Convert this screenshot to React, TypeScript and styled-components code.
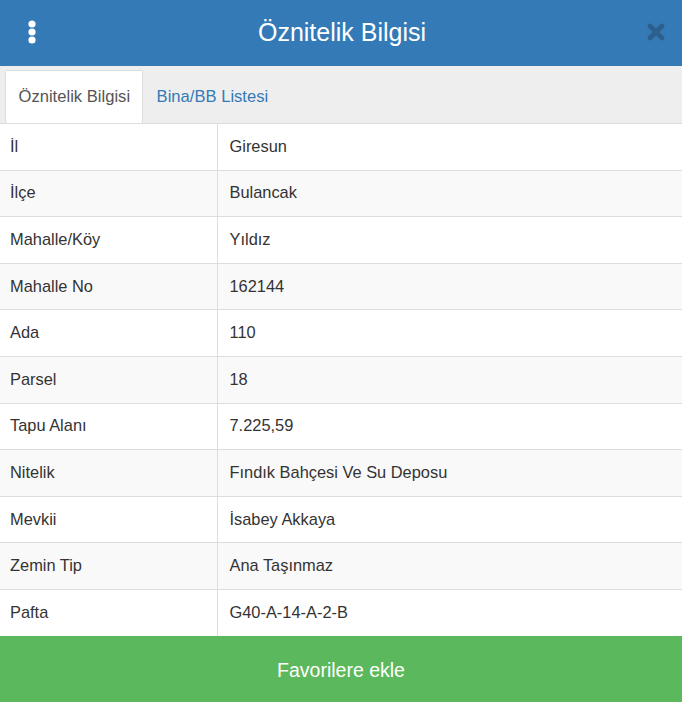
import * as React from "react";
import styled, { createGlobalStyle } from "styled-components";

const GlobalStyle = createGlobalStyle`
  html, body {
    margin: 0;
    padding: 0;
    background: #fff;
  }
  body {
    font-family: "Liberation Sans", Arial, sans-serif;
    color: #333;
  }
  * { box-sizing: border-box; }
`;

const rows: [string, string][] = [
  ["İl", "Giresun"],
  ["İlçe", "Bulancak"],
  ["Mahalle/Köy", "Yıldız"],
  ["Mahalle No", "162144"],
  ["Ada", "110"],
  ["Parsel", "18"],
  ["Tapu Alanı", "7.225,59"],
  ["Nitelik", "Fındık Bahçesi Ve Su Deposu"],
  ["Mevkii", "İsabey Akkaya"],
  ["Zemin Tip", "Ana Taşınmaz"],
  ["Pafta", "G40-A-14-A-2-B"],
];

const App = () => {
  return (
    <>
      <GlobalStyle />
      <Panel>
        <Header>
          <MenuButton>
            <svg width="10" height="26" viewBox="0 0 10 26">
              <circle cx="5" cy="5" r="3.6" fill="#fff" />
              <circle cx="5" cy="13" r="3.6" fill="#fff" />
              <circle cx="5" cy="21" r="3.6" fill="#fff" />
            </svg>
          </MenuButton>
          <Title>Öznitelik Bilgisi</Title>
          <CloseButton>
            <svg width="18" height="18" viewBox="0 0 18 18">
              <path
                d="M3 3 L15 15 M15 3 L3 15"
                stroke="#2c5f8e"
                strokeWidth="4.6"
                strokeLinecap="round"
              />
            </svg>
          </CloseButton>
        </Header>
        <Tabs>
          <Tab $active>Öznitelik Bilgisi</Tab>
          <Tab>Bina/BB Listesi</Tab>
        </Tabs>
        <Table>
          <tbody>
            {rows.map(([label, value], i) => (
              <Row key={label} $striped={i % 2 === 1}>
                <LabelCell>{label}</LabelCell>
                <ValueCell>{value}</ValueCell>
              </Row>
            ))}
          </tbody>
        </Table>
        <FavButton>Favorilere ekle</FavButton>
      </Panel>
    </>
  );
};

export default App;

const Panel = styled.div`
  width: 682px;
  height: 702px;
  display: flex;
  flex-direction: column;
  overflow: hidden;
`;

const Header = styled.div`
  height: 66px;
  flex: none;
  background: #337ab7;
  display: flex;
  align-items: center;
  justify-content: space-between;
  padding: 0 17px 0 27px;
`;

const MenuButton = styled.div`
  width: 10px;
  display: flex;
  align-items: center;
  margin-top: -2px;
`;

const Title = styled.h1`
  margin: 0 0 2px 0;
  font-size: 25px;
  font-weight: 400;
  color: #fff;
`;

const CloseButton = styled.div`
  width: 18px;
  display: flex;
  align-items: center;
  margin-top: -2px;
`;

const Tabs = styled.ul`
  flex: none;
  margin: 0;
  padding: 4px 5px 0;
  height: 57px;
  display: flex;
  background: #eee;
  list-style: none;
`;

const Tab = styled.li<{ $active?: boolean }>`
  padding: 0 12px 0 12.5px;
  height: 53px;
  display: flex;
  align-items: center;
  font-size: 16.6px;
  border: 1px solid ${(p) => (p.$active ? "#ddd" : "transparent")};
  border-bottom: 0;
  background: ${(p) => (p.$active ? "#fff" : "transparent")};
  color: ${(p) => (p.$active ? "#555" : "#337ab7")};
  border-radius: 2px 2px 0 0;
`;

const Table = styled.table`
  width: 100%;
  border-collapse: collapse;
  font-size: 16.4px;
  flex: none;
  td {
    border-top: 1px solid #ddd;
  }
`;

const Row = styled.tr<{ $striped?: boolean }>`
  background: ${(p) => (p.$striped ? "#f9f9f9" : "#fff")};
`;

const LabelCell = styled.td`
  width: 217px;
  height: 46.6px;
  padding: 0 10px 2px;
  line-height: 22px;
  border-right: 1px solid #ddd;
  vertical-align: middle;
`;

const ValueCell = styled.td`
  padding: 0 12px 2px;
  line-height: 22px;
  vertical-align: middle;
`;

const FavButton = styled.button`
  flex: 1;
  border: 0;
  margin: 0;
  background: #5cb85c;
  color: #fff;
  font-family: inherit;
  font-size: 19.5px;
  padding: 3px 0 0;
  -webkit-appearance: none;
  appearance: none;
  outline: 0;
`;
